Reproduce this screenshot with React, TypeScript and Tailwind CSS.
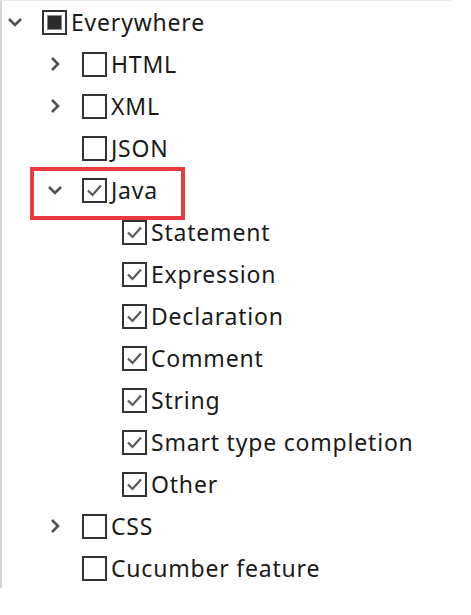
import { ReactNode } from "react";

type Node = {
  label: string;
  level: number;
  state: "none" | "checked" | "partial";
  chevron?: "down" | "right";
  highlight?: boolean;
};

const rows: Node[] = [
  { label: "Everywhere", level: 0, state: "partial", chevron: "down" },
  { label: "HTML", level: 1, state: "none", chevron: "right" },
  { label: "XML", level: 1, state: "none", chevron: "right" },
  { label: "JSON", level: 1, state: "none" },
  { label: "Java", level: 1, state: "checked", chevron: "down", highlight: true },
  { label: "Statement", level: 2, state: "checked" },
  { label: "Expression", level: 2, state: "checked" },
  { label: "Declaration", level: 2, state: "checked" },
  { label: "Comment", level: 2, state: "checked" },
  { label: "String", level: 2, state: "checked" },
  { label: "Smart type completion", level: 2, state: "checked" },
  { label: "Other", level: 2, state: "checked" },
  { label: "CSS", level: 1, state: "none", chevron: "right" },
  { label: "Cucumber feature", level: 1, state: "none" },
];

function Chevron({ dir }: { dir: "down" | "right" }) {
  return (
    <svg width="18" height="18" viewBox="0 0 18 18" className="text-[#505050]">
      {dir === "down" ? (
        <path d="M3 6 L9 12 L15 6" fill="none" stroke="currentColor" strokeWidth="2.6" />
      ) : (
        <path d="M6 3 L12 9 L6 15" fill="none" stroke="currentColor" strokeWidth="2.6" />
      )}
    </svg>
  );
}

function Box({ state }: { state: Node["state"] }) {
  return (
    <div className="w-[25px] h-[25px] border-2 border-[#333] bg-white flex items-center justify-center shrink-0">
      {state === "partial" && <div className="w-[13px] h-[13px] bg-[#2b2b2b] ring-1 ring-[#888]" />}
      {state === "checked" && (
        <svg width="19" height="19" viewBox="0 0 19 19">
          <path d="M3 9.5 L7.5 14 L16 4.5" fill="none" stroke="#585858" strokeWidth="2.2" />
        </svg>
      )}
    </div>
  );
}

function Row({ node }: { node: Node }) {
  const indent = ["pl-[0px]", "pl-[40px]", "pl-[80px]"][node.level];
  let inner: ReactNode = (
    <div className="flex items-center h-[42px]">
      <div className="w-[40px] flex justify-start pl-[4px]">
        {node.chevron && <Chevron dir={node.chevron} />}
      </div>
      <Box state={node.state} />
      <span className="ml-[4px] text-[23px] tracking-[0.8px] leading-none text-[#1a1a1a] whitespace-nowrap">
        {node.label}
      </span>
    </div>
  );
  if (node.highlight) {
    inner = (
      <div className="relative">
        {inner}
        <div className="absolute left-[-12px] top-[-2px] w-[155px] h-[53px] border-[4px] border-[#e83a3f] pointer-events-none" />
      </div>
    );
  }
  return <div className={indent}>{inner}</div>;
}

export default function App() {
  return (
    <div className="w-[471px] h-[615px] bg-white" style={{ fontFamily: '"Noto Sans", "Open Sans", sans-serif' }}>
      <div className="w-[451px] h-[588px] border-l-2 border-l-[#d4d4d4] border-t border-t-[#ebebeb] overflow-hidden">
        {rows.map((r) => (
          <Row key={r.label} node={r} />
        ))}
      </div>
    </div>
  );
}
